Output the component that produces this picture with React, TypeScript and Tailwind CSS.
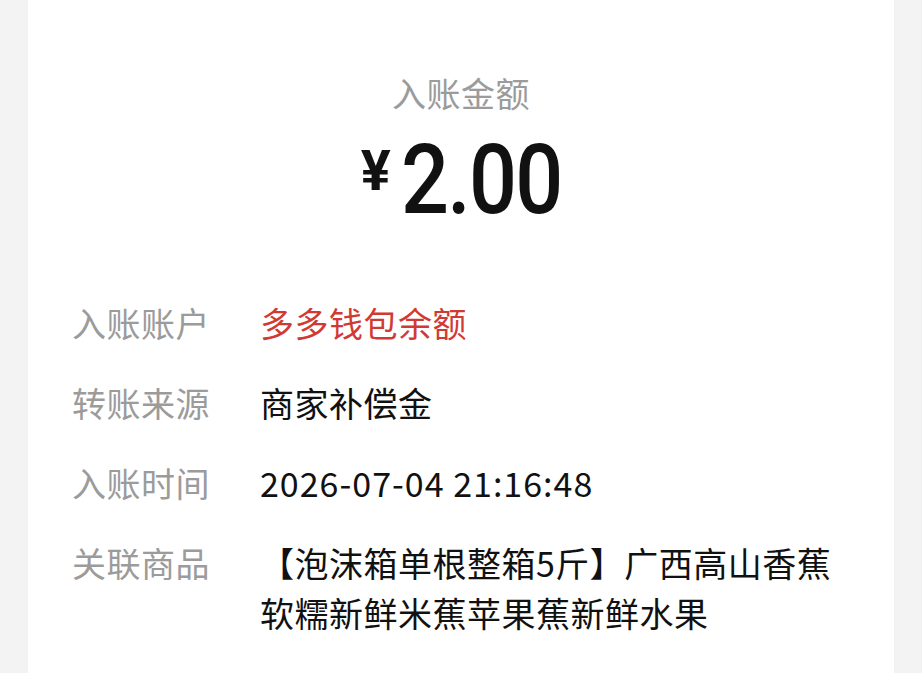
const rows = [
  { label: '入账账户', value: '多多钱包余额', tone: 'text-[#d13a33]' },
  { label: '转账来源', value: '商家补偿金', tone: 'text-[#111]' },
  { label: '入账时间', value: '2026-07-04 21:16:48', tone: 'text-[#111] tracking-[1px]' },
  {
    label: '关联商品',
    value: '【泡沫箱单根整箱5斤】广西高山香蕉软糯新鲜米蕉苹果蕉新鲜水果',
    tone: 'text-[#111]',
  },
];

export default function App() {
  return (
    <div
      className="flex h-[673px] w-[922px] justify-center overflow-hidden bg-[#f3f3f3]"
      style={{ fontFamily: '"Noto Sans CJK SC", "Noto Sans", sans-serif' }}
    >
      <div className="flex w-[866px] flex-col bg-white px-[44px]">
        {/* amount header */}
        <section className="flex flex-col items-center pt-[73px]">
          <p className="text-[34px] leading-[40px] tracking-[0.5px] text-[#9b9b9b]">入账金额</p>
          <div className="mt-[17px] flex items-start">
            <span className="mt-[13px] font-['Roboto',sans-serif] text-[56px] font-bold leading-none text-[#111]">
              ¥
            </span>
            {/* narrowed digits */}
            <span className="-mr-[11px] -ml-[1px] inline-block scale-x-[0.88] font-['Roboto',sans-serif] text-[96px] font-medium leading-[100px] tracking-[-2px] text-[#111]">
              2.00
            </span>
          </div>
        </section>

        {/* detail rows */}
        <dl className="mt-[68px] flex flex-col gap-[30px] text-[34px] leading-[50px] tracking-[0.5px]">
          {rows.map((row) => (
            <div key={row.label} className="flex">
              <dt className="w-[188px] shrink-0 text-[#9b9b9b]">{row.label}</dt>
              <dd className={`min-w-0 flex-1 ${row.tone}`}>{row.value}</dd>
            </div>
          ))}
        </dl>
      </div>
    </div>
  );
}
